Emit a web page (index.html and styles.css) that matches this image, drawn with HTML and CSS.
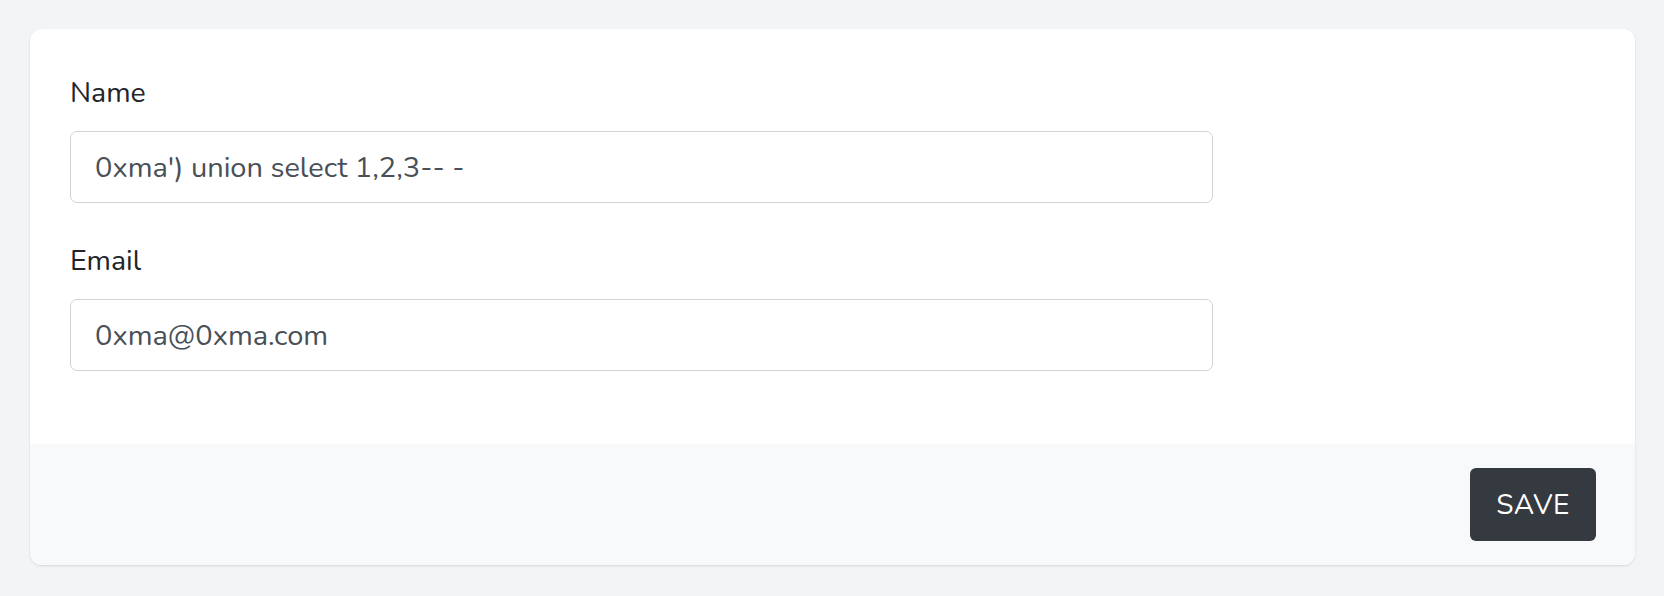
FILE: index.html
```html
<!DOCTYPE html>
<html lang="en">
<head>
<meta charset="utf-8">
<title>Profile</title>
<link rel="stylesheet" href="styles.css">
</head>
<body>
  <div class="card">
    <form class="card-body">
      <div class="field">
        <label class="label" for="name">Name</label>
        <input class="input" id="name" type="text" value="0xma') union select 1,2,3-- -">
      </div>
      <div class="field">
        <label class="label" for="email">Email</label>
        <input class="input" id="email" type="email" value="0xma@0xma.com">
      </div>
    </form>
    <div class="card-footer">
      <button class="btn" type="button">SAVE</button>
    </div>
  </div>
</body>
</html>
```
FILE: styles.css
```css
html, body {
  margin: 0;
  padding: 0;
}
body {
  background: #f3f4f6;
  font-family: "Nunito", "Lato", "Open Sans", sans-serif;
  padding: 29px 29px 31px 30px;
  box-sizing: border-box;
  height: 596px;
}
.card {
  background: #ffffff;
  border-radius: 12px;
  box-shadow: 0 1px 3px rgba(0,0,0,0.08), 0 1px 2px rgba(0,0,0,0.05);
  overflow: hidden;
}
.card-body {
  margin: 0;
  padding: 44px 41px 73px 40px;
  display: flex;
  flex-direction: column;
  gap: 38px;
}
.field {
  display: flex;
  flex-direction: column;
  gap: 18px;
}
.label {
  font-size: 28.5px;
  line-height: 40px;
  color: #212529;
}
.input {
  width: 75%;
  box-sizing: border-box;
  height: 72px;
  border: 1.5px solid #ced4da;
  border-radius: 7px;
  padding: 0 24px;
  font-family: inherit;
  font-size: 29px;
  color: #495057;
  background: #fff;
  outline: none;
}
.card-footer {
  background: #f8f9fa;
  padding: 24px 39px 24px 24px;
  display: flex;
  justify-content: flex-end;
}
.btn {
  width: 126px;
  height: 73px;
  background: #343a40;
  color: #ffffff;
  border: none;
  border-radius: 6px;
  font-family: inherit;
  font-size: 28px;
  letter-spacing: 0.5px;
  padding: 0;
  cursor: pointer;
}
```
